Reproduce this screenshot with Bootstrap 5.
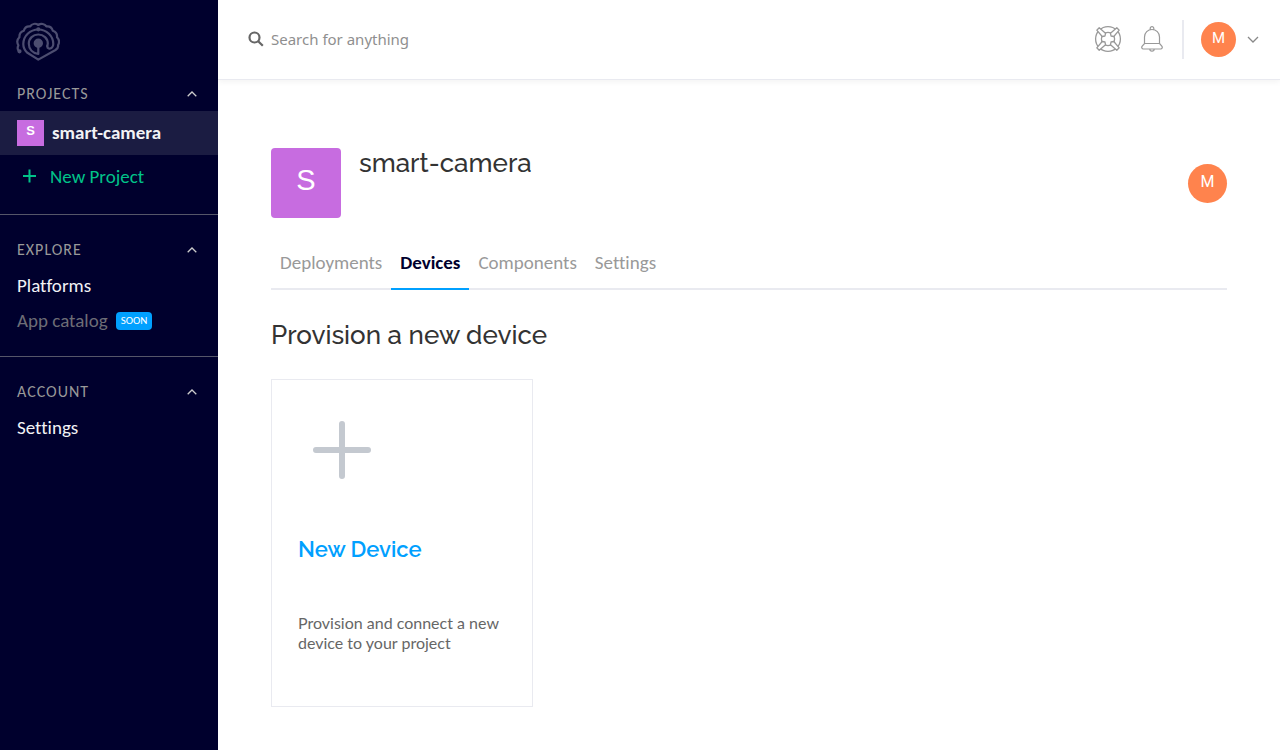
<!DOCTYPE html>
<html lang="en">
<head>
<meta charset="utf-8">
<meta name="viewport" content="width=device-width, initial-scale=1">
<title>smart-camera – Devices</title>
<link href="https://cdn.jsdelivr.net/npm/bootstrap@5.3.0/dist/css/bootstrap.min.css" rel="stylesheet">
<style>
  :root { --navy: #00002d; --blue: #00a0ff; --orange: #ff834d; --violet: #c76ce0; --line: #e9eaf0; }
  body { font-family: Carlito, Lato, sans-serif; font-size: 19px; line-height: 24px; color: #333; font-variant-ligatures: none; }
  a { text-decoration: none; }
  h1, h2, h3 { font-family: Raleway, Lato, sans-serif; }
  .sidebar { width: 218px; background: var(--navy); }
  .brand-link { padding: 22px 16px 16px; line-height: 0; }
  .side-group { border-bottom: 1px solid #555669; }
  .side-group:last-child { border-bottom: 0; }
  .side-toggle { height: 34px; padding: 0 21px 0 17px; font-size: 15px; letter-spacing: 1px; color: #999; background: none; border: 0; }
  .side-toggle { font-size: 16px; line-height: 20px; }
  .side-link { height: 35px; padding: 0 17px; color: #f2f2f5; }
  .side-link.active { height: 44px; background: #1b1c42; font-weight: 700; }
  .side-link.create { height: 43px; padding-left: 22px; gap: 13px; color: #00c389; }
  .side-link.soon { color: #6d6d76; }
  .group-next { padding: 18px 0; }
  .group-next .collapse { padding-top: 1px; }
  .group-first { padding-bottom: 16px; }
  .tile-sm { width: 27px; height: 26px; background: var(--violet); color: #fff; font: 700 13px/22px "Liberation Sans", sans-serif; }
  .soon-tag { padding: 4px 5px; border-radius: 4px; background: var(--blue); font-size: 11px; font-weight: 400; line-height: 10px; }
  .topbar { height: 80px; padding: 0 21px 0 30px; border-bottom: 1px solid var(--line); box-shadow: 0 2px 6px rgba(0,0,0,.05); }
  .search-form { padding-bottom: 2px; }
  .search-box { padding: 0 7px; font: 15px/24px "Noto Sans", sans-serif; color: #444; }
  .search-box::placeholder { color: #8f8f8f; opacity: 1; }
  .top-tools { gap: 19px; }
  .tool-btn { padding: 0 0 2px; }
  .account { gap: 11px; padding: 0 0 0 17px; height: 39px; border-width: 0 0 0 2px; border-color: var(--line); }
  .avatar { width: 35px; height: 35px; background: var(--orange); color: #fff; font: 15px/33px Roboto, sans-serif; }
  .avatar-lg { width: 39px; height: 39px; font-size: 16px; line-height: 36px; }
  .content { padding: 68px 53px 43px; }
  .tile-lg { width: 70px; height: 70px; border-radius: 4px; background: var(--violet); color: #fff; font: 29px/64px "Liberation Sans", sans-serif; }
  .project-head { gap: 18px; }
  .page-title { font-size: 26px; line-height: 30px; font-weight: 500; }
  .tab-row { margin-top: 20px; border-bottom: 2px solid var(--line); }
  .tab-row .nav-link { margin-bottom: -2px; padding: 13px 9px; color: #999; border: 0; border-bottom: 2px solid transparent; }
  .tab-row .nav-link.active { color: var(--navy); font-weight: 700; border-color: var(--blue); }
  .section-title { margin: 30px 0 29px; font-size: 26px; line-height: 30px; font-weight: 500; }
  .device-card { width: 262px; padding: 27px 26px; border: 1px solid var(--line); border-radius: 0; }
  .device-card svg { margin: 13px 0 0 14px; }
  .device-card h3 { margin: 55px 0 50px; font-size: 22px; line-height: 28px; font-weight: 600; color: var(--blue); }
  .device-card p { margin-bottom: 26px; font-family: Lato, sans-serif; font-size: 16px; line-height: 20px; color: #666; }
</style>
</head>
<body>
<div class="d-flex min-vh-100">
  <nav class="sidebar flex-shrink-0" aria-label="Main">
    <a href="#" class="brand-link d-block" aria-label="Home">
      <svg width="44" height="39" viewBox="0 0 44 39" fill="none" stroke="#4c4d70" stroke-width="2.200" stroke-linecap="round" stroke-linejoin="round">
        <path d="M3.200 29.500C1.600 28 1.300 25.500 2.400 23.200C.8 20.500 1 17.500 3.400 15.300C3.200 12 4.800 9.800 7.800 8.800C8.600 5.800 11 4.200 14 4.500C16 1.800 19.500 1 22.300 3C25 1 28.600 1.800 30.600 4.500C33.600 4.200 36 5.800 36.800 8.800C39.800 9.800 41.400 12 41 15.300C43.200 17.500 43.600 20.500 42 23.200C42.600 25.200 41.500 26.600 39.500 28L22.300 37.600L11 30.500C8.500 28 7.300 25 7.300 22A15 14.500 0 0 1 37.300 22C37.300 23.500 37 24.500 36 25.500C34 27.500 31 26.500 31.300 24"/>
        <path d="M22.300 21.500V32C16.500 31 12.800 27 12.800 21.500A9.500 9 0 0 1 31.800 21.500L31.300 24"/>
        <circle cx="22.300" cy="21.300" r="3.600" fill="#4c4d70"/><circle cx="3.500" cy="29.300" r="1" fill="#4c4d70"/><circle cx="22.300" cy="7.300" r="1"/>
      </svg>
    </a>
    <section class="side-group group-first">
      <button type="button" class="side-toggle d-flex align-items-center justify-content-between w-100" data-bs-toggle="collapse" data-bs-target="#projects" aria-expanded="true" aria-controls="projects">PROJECTS
        <svg width="10" height="6" viewBox="0 0 10 6" fill="none" stroke="#ccc" stroke-width="1.300"><path d="M.7 5.300 5 1l4.300 4.300"/></svg></button>
      <div id="projects" class="collapse show">
        <a href="#" class="side-link active d-flex align-items-center gap-2"><span class="tile-sm text-center">S</span>smart-camera</a>
        <a href="#" class="side-link create d-flex align-items-center"><svg width="15" height="15" viewBox="0 0 15 15" stroke="#00c389" stroke-width="2"><path d="M1 7h13M7.500 .5v13"/></svg>New Project</a>
      </div>
    </section>
    <section class="side-group group-next">
      <button type="button" class="side-toggle d-flex align-items-center justify-content-between w-100" data-bs-toggle="collapse" data-bs-target="#explore" aria-expanded="true" aria-controls="explore">EXPLORE
        <svg width="10" height="6" viewBox="0 0 10 6" fill="none" stroke="#ccc" stroke-width="1.300"><path d="M.7 5.300 5 1l4.300 4.300"/></svg></button>
      <div id="explore" class="collapse show">
        <a href="#" class="side-link d-flex align-items-center">Platforms</a>
        <a href="#" class="side-link soon d-flex align-items-center gap-2">App catalog <span class="badge soon-tag">SOON</span></a>
      </div>
    </section>
    <section class="side-group group-next">
      <button type="button" class="side-toggle d-flex align-items-center justify-content-between w-100" data-bs-toggle="collapse" data-bs-target="#account" aria-expanded="true" aria-controls="account">ACCOUNT
        <svg width="10" height="6" viewBox="0 0 10 6" fill="none" stroke="#ccc" stroke-width="1.300"><path d="M.7 5.300 5 1l4.300 4.300"/></svg></button>
      <div id="account" class="collapse show">
        <a href="#" class="side-link d-flex align-items-center">Settings</a>
      </div>
    </section>
  </nav>

  <div class="flex-grow-1">
    <header class="topbar d-flex align-items-center justify-content-between">
      <form class="search-form d-flex align-items-center flex-grow-1" role="search">
        <label for="search" class="d-flex" aria-label="Search"><svg width="16" height="16" viewBox="0 0 16 16" fill="none" stroke="#666" stroke-width="2.200"><circle cx="6.500" cy="6.500" r="5"/><path d="m10.200 10.200 4.600 4.600"/></svg></label>
        <input id="search" type="search" class="search-box form-control border-0 shadow-none bg-transparent" placeholder="Search for anything">
      </form>
      <div class="top-tools d-flex align-items-center">
        <button type="button" class="tool-btn btn border-0 d-flex" aria-label="Help">
          <svg width="28" height="28" viewBox="0 0 28 28" fill="none" stroke="#999" stroke-width="1.300">
            <circle cx="14" cy="14" r="12.400"/><circle cx="14" cy="14" r="6.600"/>
            <g fill="#fff" stroke-linejoin="round"><path d="M2.800 5.200 5.200 2.800 11.500 8.200 11 11 8.200 11.500Z"/><path d="M2.800 5.200 5.200 2.800 11.500 8.200 11 11 8.200 11.500Z" transform="rotate(90 14 14)"/><path d="M2.800 5.200 5.200 2.800 11.500 8.200 11 11 8.200 11.500Z" transform="rotate(180 14 14)"/><path d="M2.800 5.200 5.200 2.800 11.500 8.200 11 11 8.200 11.500Z" transform="rotate(270 14 14)"/></g>
          </svg>
        </button>
        <button type="button" class="tool-btn btn border-0 d-flex" aria-label="Notifications">
          <svg width="22" height="26" viewBox="0 0 22 26" fill="none" stroke="#999" stroke-width="1.200">
            <path d="M9.200 3.700V2.400a1.800 1.800 0 0 1 3.600 0v1.300M3.500 17.500V11a7.500 7.500 0 0 1 15 0v6.500l2.300 2.700c1 1.300.3 2.800-1.200 2.800H2.400C.9 23 .2 21.500 1.200 20.200L3.500 17.500h15M8.800 23a2.200 2.200 0 0 0 4.400 0"/>
          </svg>
        </button>
        <button type="button" class="account btn rounded-0 d-flex align-items-center" aria-label="Account menu">
          <span class="avatar rounded-circle">M</span>
          <svg width="12" height="8" viewBox="0 0 12 8" fill="none" stroke="#888" stroke-width="1.300"><path d="m1 1 5 5 5-5"/></svg>
        </button>
      </div>
    </header>

    <main class="content">
      <div class="project-head d-flex">
        <span class="tile-lg text-center">S</span>
        <h1 class="page-title mb-0">smart-camera</h1>
        <span class="avatar avatar-lg rounded-circle text-center ms-auto align-self-center">M</span>
      </div>
      <nav class="tab-row nav" aria-label="Project">
        <a class="nav-link" href="#">Deployments</a>
        <a class="nav-link active" href="#" aria-current="page">Devices</a>
        <a class="nav-link" href="#">Components</a>
        <a class="nav-link" href="#">Settings</a>
      </nav>
      <h2 class="section-title">Provision a new device</h2>
      <a href="#" class="device-card card">
        <svg width="60" height="60" viewBox="0 0 60 60" stroke="#c4c9d0" stroke-width="6" stroke-linecap="round"><path d="M4 30h52M30 4v52"/></svg>
        <h3>New Device</h3>
        <p>Provision and connect a new device to your project</p>
      </a>
    </main>
  </div>
</div>
<script src="https://cdn.jsdelivr.net/npm/bootstrap@5.3.0/dist/js/bootstrap.bundle.min.js"></script>
</body>
</html>
